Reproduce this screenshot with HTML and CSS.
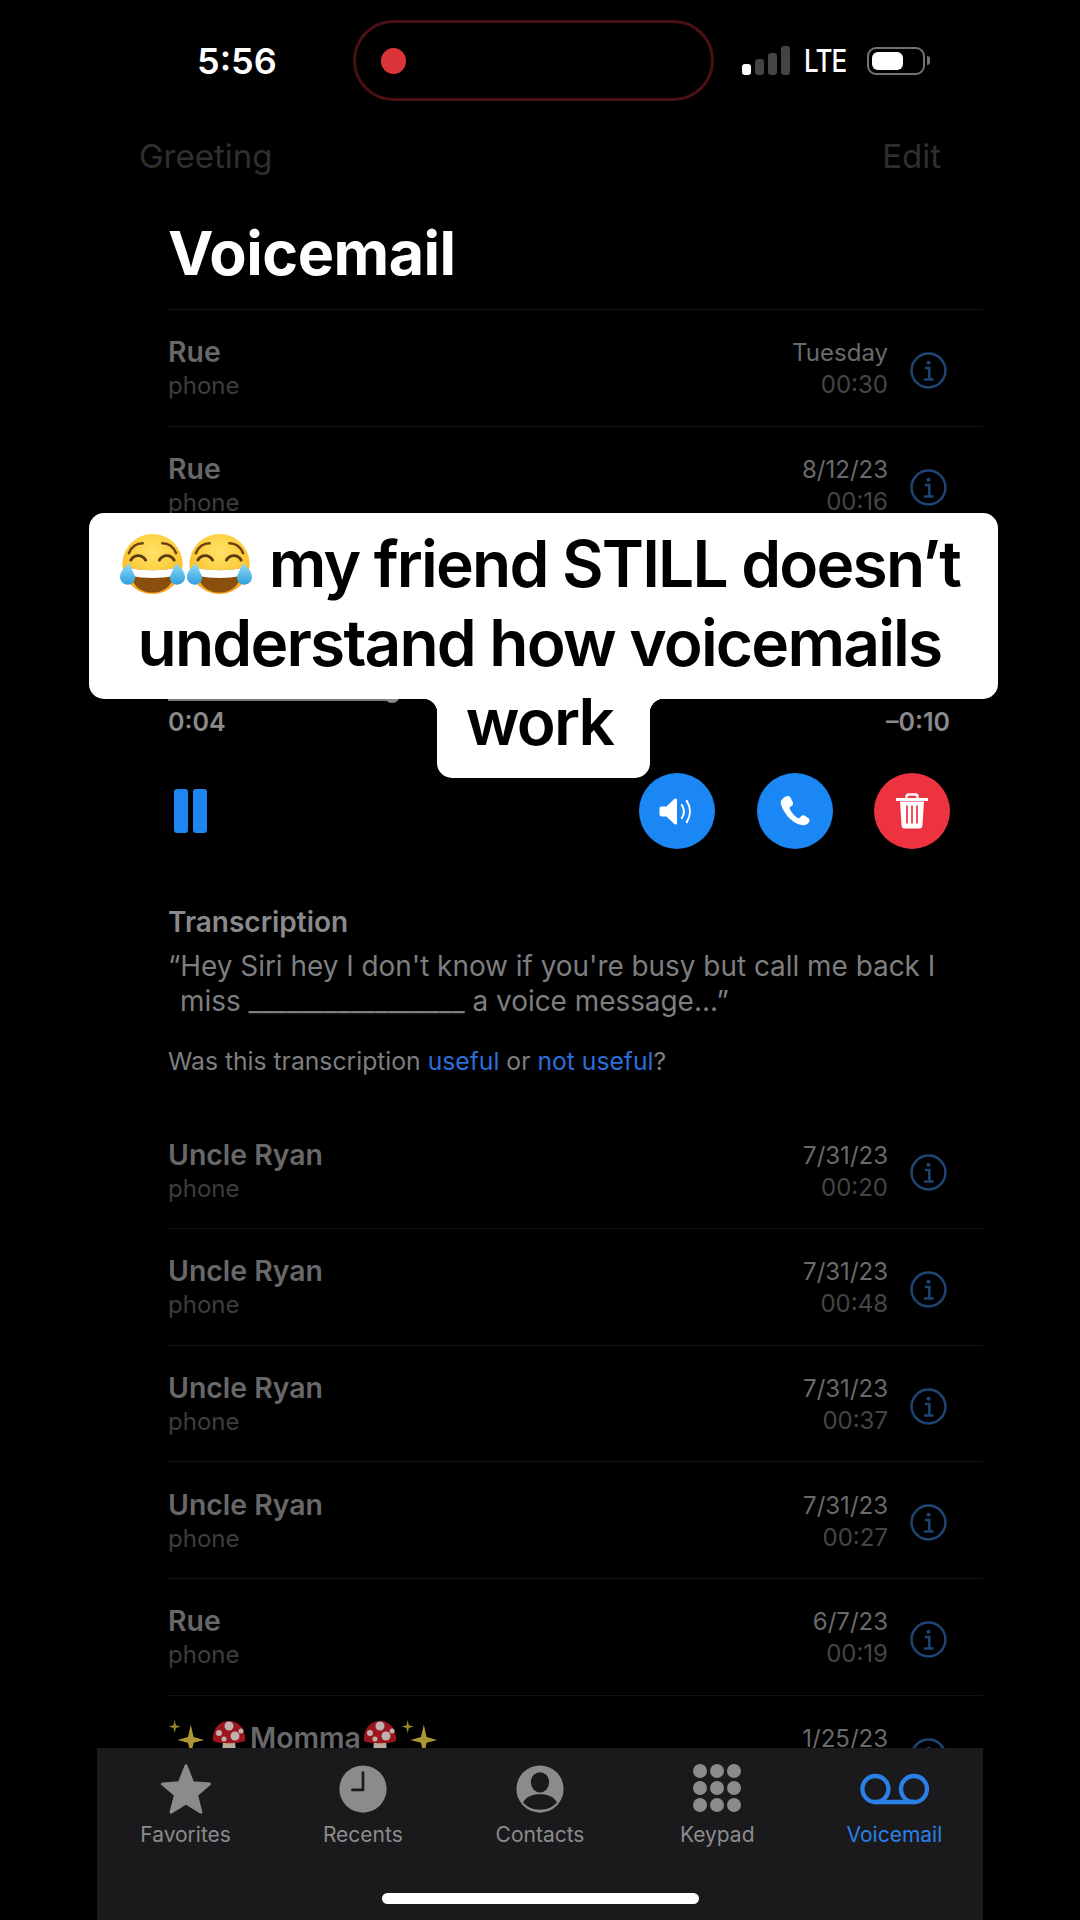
FILE: index.html
```html
<!DOCTYPE html>
<html lang="en">
<head>
    <meta charset="UTF-8">
    <meta name="viewport" content="width=device-width, initial-scale=1.0">
    <title>Voicemail</title>
    <link rel="stylesheet" href="styles.css">
</head>
<body>
    <!-- Shared icons -->
    <svg class="defs" width="0" height="0">
        <defs>
            <radialGradient id="faceFill" cx="50%" cy="30%" r="75%">
                <stop offset="0" stop-color="#ffe368"/>
                <stop offset="0.65" stop-color="#fdc531"/>
                <stop offset="1" stop-color="#f09a17"/>
            </radialGradient>
            <linearGradient id="tearFill" x1="0" y1="0" x2="0" y2="1">
                <stop offset="0" stop-color="#8fdcf8"/>
                <stop offset="1" stop-color="#2f9fe0"/>
            </linearGradient>
            <symbol id="i-info" viewBox="0 0 36 36">
                <circle cx="18" cy="18" r="16.5" fill="none" stroke="currentColor" stroke-width="2.4"/>
                <circle cx="18" cy="10.5" r="2" fill="currentColor"/>
                <path d="M14.5 15.5h4.3v11M13.5 26.8h9.5" fill="none" stroke="currentColor" stroke-width="2.4"/>
            </symbol>
            <symbol id="i-joy" viewBox="0 0 68 66">
                <circle cx="34" cy="33" r="30.5" fill="url(#faceFill)"/>
                <path d="M10 22c3-7 8-10 14-10" fill="none" stroke="#6b4210" stroke-width="2.6" stroke-linecap="round"/>
                <path d="M58 22c-3-7-8-10-14-10" fill="none" stroke="#6b4210" stroke-width="2.6" stroke-linecap="round"/>
                <path d="M12 29c4-6 11-6 15 0" fill="none" stroke="#5a3a10" stroke-width="3" stroke-linecap="round"/>
                <path d="M41 29c4-6 11-6 15 0" fill="none" stroke="#5a3a10" stroke-width="3" stroke-linecap="round"/>
                <path d="M11 37c15 3 31 3 46 0c0 16-10 25-23 25s-23-9-23-25z" fill="#8a4f0c"/>
                <path d="M11 37c15 3 31 3 46 0c0 3-.4 5-1 8c-14 3-30 3-44 0c-.6-3-1-5-1-8z" fill="#fff"/>
                <path d="M10 32c-3 4-9 8-9 14c0 5 4 8 8 8c5 0 8-4 7-9z" fill="url(#tearFill)"/>
                <path d="M58 32c3 4 9 8 9 14c0 5-4 8-8 8c-5 0-8-4-7-9z" fill="url(#tearFill)"/>
            </symbol>
            <symbol id="i-sparkle" viewBox="0 0 40 44">
                <path d="M24 8l3 13l11 3l-11 3l-3 13l-3-13l-11-3l11-3z" fill="#ad9735"/>
                <path d="M7 3l1.300 5.500l5 1.500l-5 1.500l-1.300 5.500l-1.300-5.500l-5-1.500l5-1.500z" fill="#96822e"/>
                <path d="M9 32l1 4l4 1l-4 1l-1 4l-1-4l-4-1l4-1z" fill="#96822e"/>
            </symbol>
            <symbol id="i-shroom" viewBox="0 0 36 38">
                <path d="M12 22h12l1 12c0 3-14 3-14 0z" fill="#b9aa9a"/>
                <path d="M2 22C1 9 9 2 18 2s17 7 16 20c-6 3-26 3-32 0z" fill="#9c161d"/>
                <circle cx="18" cy="7" r="4.500" fill="#bfb2ae"/>
                <circle cx="8" cy="14" r="3" fill="#bfb2ae"/>
                <circle cx="24" cy="17" r="4.500" fill="#bfb2ae"/>
                <circle cx="13" cy="20" r="2.500" fill="#bfb2ae"/>
                <circle cx="30" cy="12" r="2.500" fill="#bfb2ae"/>
            </symbol>
        </defs>
    </svg>

    <div class="app">
        <!-- Status bar -->
        <div class="status">
            <span class="clock">5:56</span>
            <div class="island"><span class="rec-dot"></span></div>
            <div class="signal">
                <span class="bar bar-1"></span>
                <span class="bar bar-2"></span>
                <span class="bar bar-3"></span>
                <span class="bar bar-4"></span>
            </div>
            <span class="lte">LTE</span>
            <div class="battery"><span class="battery-level"></span></div>
            <span class="battery-tip"></span>
        </div>

        <div class="nav">
            <span>Greeting</span>
            <span>Edit</span>
        </div>

        <h1 class="title">Voicemail</h1>

        <div class="list">
            <div class="row">
                <div class="who"><div class="name">Rue</div><div class="kind">phone</div></div>
                <div class="when"><div class="date">Tuesday</div><div class="length">00:30</div></div>
                <svg class="info"><use href="#i-info"/></svg>
            </div>
            <div class="row">
                <div class="who"><div class="name">Rue</div><div class="kind">phone</div></div>
                <div class="when"><div class="date">8/12/23</div><div class="length">00:16</div></div>
                <svg class="info"><use href="#i-info"/></svg>
            </div>

            <!-- Open message -->
            <div class="detail">
                <div class="slider"><span class="slider-knob"></span></div>
                <div class="times">
                    <span>0:04</span>
                    <span>–0:10</span>
                </div>
                <div class="controls">
                    <div class="pause"><span></span><span></span></div>
                    <div class="round blue">
                        <svg width="36" height="31" viewBox="0 0 44 38">
                            <path d="M3 13h6L19 3.500c1-1 3-.5 3 1.500v28c0 2-2 2.500-3 1.500L9 25H3c-1.500 0-2.500-1-2.500-2.500v-7C.5 14 1.500 13 3 13z" fill="#fff"/>
                            <path d="M28 11c3 5 3 11 0 16" fill="none" stroke="#fff" stroke-width="2.500" stroke-linecap="round"/>
                            <path d="M34 6c5 8 5 18 0 26" fill="none" stroke="#fff" stroke-width="2.500" stroke-linecap="round"/>
                        </svg>
                    </div>
                    <div class="round blue">
                        <svg width="30" height="32" viewBox="0 0 34 36">
                            <path d="M7 1.500c2-1 4-.5 5 1.500l2.500 5c.7 1.500.3 3-1 4l-2 1.500c-.7.500-.8 1.200-.5 2c2 4.500 5 8 9 10.500c.8.500 1.500.4 2.100-.2l1.800-1.800c1.200-1.200 2.700-1.400 4.100-.5l4 2.500c1.800 1.200 2 3.200.8 4.800c-2 2.800-5 4-8.300 3C15 33 4 21 1 10c-.8-3.500 2-7 6-8.500z" fill="#fff"/>
                        </svg>
                    </div>
                    <div class="round red">
                        <svg width="32" height="36" viewBox="0 0 32 36">
                            <path d="M1 6.500h30" stroke="#fff" stroke-width="3" stroke-linecap="round"/>
                            <path d="M10.500 6V3.500c0-1 .8-2 2-2h7c1.200 0 2 1 2 2V6" fill="none" stroke="#fff" stroke-width="2.400"/>
                            <path d="M4 8.500h24l-1.600 24.500c-.1 1.500-1.200 2.500-2.700 2.500H8.300c-1.500 0-2.600-1-2.700-2.500z" fill="#fff"/>
                            <path d="M11 12.500v18M16 12.500v18M21 12.500v18" stroke="#ee3340" stroke-width="1.700"/>
                        </svg>
                    </div>
                </div>
                <div class="transcript-title">Transcription</div>
                <p class="transcript">“Hey Siri hey I don't know if you're busy but call me back I<br><span class="indent">miss <span class="gap">_________________</span> a voice message...”</span></p>
                <p class="feedback">Was this transcription <span class="link">useful</span> or <span class="link">not useful</span>?</p>
            </div>

            <div class="row">
                <div class="who"><div class="name">Uncle Ryan</div><div class="kind">phone</div></div>
                <div class="when"><div class="date">7/31/23</div><div class="length">00:20</div></div>
                <svg class="info"><use href="#i-info"/></svg>
            </div>
            <div class="row">
                <div class="who"><div class="name">Uncle Ryan</div><div class="kind">phone</div></div>
                <div class="when"><div class="date">7/31/23</div><div class="length">00:48</div></div>
                <svg class="info"><use href="#i-info"/></svg>
            </div>
            <div class="row">
                <div class="who"><div class="name">Uncle Ryan</div><div class="kind">phone</div></div>
                <div class="when"><div class="date">7/31/23</div><div class="length">00:37</div></div>
                <svg class="info"><use href="#i-info"/></svg>
            </div>
            <div class="row">
                <div class="who"><div class="name">Uncle Ryan</div><div class="kind">phone</div></div>
                <div class="when"><div class="date">7/31/23</div><div class="length">00:27</div></div>
                <svg class="info"><use href="#i-info"/></svg>
            </div>
            <div class="row">
                <div class="who"><div class="name">Rue</div><div class="kind">phone</div></div>
                <div class="when"><div class="date">6/7/23</div><div class="length">00:19</div></div>
                <svg class="info"><use href="#i-info"/></svg>
            </div>
            <div class="row">
                <div class="who">
                    <div class="name name-emoji">
                        <svg class="sparkle"><use href="#i-sparkle"/></svg>
                        <svg class="shroom"><use href="#i-shroom"/></svg>
                        <span>Momma</span>
                        <svg class="shroom"><use href="#i-shroom"/></svg>
                        <svg class="sparkle"><use href="#i-sparkle"/></svg>
                    </div>
                    <div class="kind">phone</div>
                </div>
                <div class="when"><div class="date">1/25/23</div><div class="length">00:12</div></div>
                <svg class="info"><use href="#i-info"/></svg>
            </div>
        </div>

        <!-- Tab bar over the list -->
        <div class="tabbar">
            <div class="tab">
                <svg class="tab-icon" viewBox="0 0 56 56">
                    <path d="M28 4l7 17.500 17.500 1.200-13.500 11.500 4.500 18L28 42.500 12.500 52l4.500-18L3.500 22.700 21 21.500z" fill="currentColor" stroke="currentColor" stroke-width="3" stroke-linejoin="round"/>
                </svg>
                <span>Favorites</span>
            </div>
            <div class="tab">
                <svg class="tab-icon" viewBox="0 0 56 56">
                    <circle cx="28" cy="28" r="24.500" fill="currentColor"/>
                    <path d="M28 11v18H17" fill="none" stroke="#1a1a1c" stroke-width="2.800" stroke-linecap="round" stroke-linejoin="round"/>
                </svg>
                <span>Recents</span>
            </div>
            <div class="tab">
                <svg class="tab-icon" viewBox="0 0 56 56">
                    <circle cx="28" cy="28" r="24.500" fill="currentColor"/>
                    <ellipse cx="28" cy="21" rx="9.500" ry="10.500" fill="#1a1a1c"/>
                    <path d="M10.500 42c3-6 10-8.500 17.500-8.500S42.500 36 45.500 42C41 47 35 49.500 28 49.500S15 47 10.500 42z" fill="#1a1a1c"/>
                </svg>
                <span>Contacts</span>
            </div>
            <div class="tab">
                <div class="keypad">
                    <span></span><span></span><span></span>
                    <span></span><span></span><span></span>
                    <span></span><span></span><span></span>
                </div>
                <span>Keypad</span>
            </div>
            <div class="tab tab-active">
                <svg class="tab-icon" viewBox="0 0 72 56">
                    <circle cx="16" cy="28" r="13.500" fill="none" stroke="currentColor" stroke-width="4.500"/>
                    <circle cx="56" cy="28" r="13.500" fill="none" stroke="currentColor" stroke-width="4.500"/>
                    <path d="M16 41.500h40" stroke="currentColor" stroke-width="4.500"/>
                </svg>
                <span>Voicemail</span>
            </div>
            <div class="home-bar"></div>
        </div>

        <!-- Video caption -->
        <div class="caption">
            <div class="caption-main">
                <div class="caption-line">
                    <svg class="joy"><use href="#i-joy"/></svg><svg class="joy"><use href="#i-joy"/></svg>
                    <span>my friend STILL doesn’t</span>
                </div>
                <div class="caption-line">understand how voicemails</div>
            </div>
            <div class="caption-tail">work</div>
        </div>
    </div>
</body>
</html>
```

FILE: styles.css
```css
body, html {
    margin: 0;
    padding: 0;
    background-color: #000;
    font-family: Inter, "Liberation Sans", sans-serif;
}

.defs {
    display: block;
    position: absolute;
}

.app {
    position: relative;
    width: 1080px;
    height: 1920px;
    overflow: hidden;
    background-color: #000;
}

/* Status bar */
.status {
    display: flex;
    align-items: center;
    height: 81px;
    padding: 20px 0 0 197px;
    color: #fff;
}

.clock {
    width: 80px;
    font-size: 36px;
    font-weight: 600;
}

.island {
    display: flex;
    align-items: center;
    box-sizing: border-box;
    width: 361px;
    height: 81px;
    margin-left: 76px;
    padding-left: 25px;
    border: 3px solid #4a1012;
    border-radius: 41px;
}

.rec-dot {
    width: 25px;
    height: 26px;
    border-radius: 50%;
    background-color: #dc3539;
}

.signal {
    display: flex;
    align-items: flex-end;
    gap: 4px;
    height: 29px;
    margin-left: 28px;
}

.bar {
    width: 9px;
    border-radius: 3px;
    background-color: #444446;
}

.bar-1 { height: 11px; background-color: #fff; }
.bar-2 { height: 16px; }
.bar-3 { height: 22px; }
.bar-4 { height: 29px; }

.lte {
    width: 44px;
    margin-left: 14px;
    font-size: 31px;
    font-weight: 500;
    letter-spacing: -1px;
    transform: scaleX(0.84);
    transform-origin: left center;
}

.battery {
    box-sizing: border-box;
    width: 58px;
    height: 28px;
    margin-left: 19px;
    padding: 3px;
    border: 2px solid #737375;
    border-radius: 9px;
}

.battery-level {
    display: block;
    width: 31px;
    height: 18px;
    border-radius: 6px;
    background-color: #fff;
}

.battery-tip {
    width: 3px;
    height: 9px;
    margin-left: 2px;
    border-radius: 0 3px 3px 0;
    background-color: #737375;
}

/* Nav and title */
.nav {
    display: flex;
    justify-content: space-between;
    margin: 35px 139px 0;
    font-size: 33px;
    line-height: 40px;
    color: #2f2f31;
}

.title {
    margin: 42px 0 21px 168px;
    font-size: 61px;
    font-weight: 700;
    line-height: 70px;
    letter-spacing: -0.5px;
    color: #fff;
}

/* Voicemail rows */
.list {
    margin: 0 97px 0 168px;
    border-top: 1px solid #121212;
}

.row {
    display: flex;
    align-items: center;
    box-sizing: border-box;
    height: 116.7px;
    padding: 3px 36px 0 0;
    border-bottom: 1px solid #121212;
}

.who {
    flex: 1;
}

.name {
    font-size: 28.4px;
    font-weight: 600;
    line-height: 34px;
    color: #68686a;
}

.name-emoji {
    display: flex;
    align-items: center;
    height: 34px;
}

.sparkle {
    flex: none;
    width: 38px;
    height: 42px;
    margin-right: 5px;
}

.shroom {
    flex: none;
    width: 36px;
    height: 38px;
    margin-right: 3px;
}

.name-emoji span {
    margin-right: 1px;
}

.kind {
    font-size: 24px;
    line-height: 34px;
    color: #3d3d3f;
}

.when {
    text-align: right;
    font-size: 24px;
    line-height: 32px;
}

.date {
    color: #6a6a6c;
}

.length {
    color: #454547;
}

.info {
    width: 37px;
    height: 37px;
    margin: 2px 0 0 22px;
    color: #1d4674;
}

/* Open message */
.detail {
    padding: 155px 33px 0 0;
}

.slider {
    position: relative;
    width: 224px;
    height: 3px;
    background-color: #7c7c7e;
}

.slider-knob {
    position: absolute;
    top: -11px;
    right: -8px;
    width: 16px;
    height: 16px;
    border-radius: 50%;
    background-color: #8a8a8c;
}

.times {
    display: flex;
    justify-content: space-between;
    margin-top: 7px;
    font-size: 25px;
    font-weight: 600;
    line-height: 28px;
    color: #8a8a8c;
}

.controls {
    display: flex;
    align-items: center;
    gap: 41.5px;
    margin-top: 37px;
}

.pause {
    display: flex;
    gap: 5px;
    margin: 0 auto 0 6px;
}

.pause span {
    width: 14px;
    height: 44px;
    border-radius: 3px;
    background-color: #1d86f0;
}

.round {
    display: flex;
    align-items: center;
    justify-content: center;
    width: 76px;
    height: 76px;
    border-radius: 50%;
}

.blue {
    background-color: #1a87f5;
}

.red {
    background-color: #ee3340;
}

.transcript-title {
    margin-top: 56px;
    font-size: 28px;
    font-weight: 600;
    line-height: 34px;
    color: #8a8a8c;
}

.transcript {
    margin: 10px 0 0 0;
    font-size: 27.9px;
    line-height: 35px;
    color: #7e7e80;
}

.indent {
    padding-left: 12px;
}

.feedback {
    margin: 25px 0 0 0;
    padding-bottom: 34px;
    font-size: 24.7px;
    line-height: 34px;
    color: #7e7e80;
}

.link {
    color: #2a6fdc;
}

/* Tab bar */
.tabbar {
    position: absolute;
    left: 97px;
    bottom: 0;
    display: flex;
    box-sizing: border-box;
    width: 886px;
    height: 172px;
    padding-top: 14px;
    background-color: #1a1a1c;
}

.tab {
    display: flex;
    flex: 1;
    flex-direction: column;
    align-items: center;
    font-size: 21px;
    line-height: 26px;
    color: #8b8b8e;
}

.tab-icon {
    height: 54px;
    margin-bottom: 6px;
}

.tab-active {
    color: #2a80e6;
}

.keypad {
    display: grid;
    grid-template-columns: repeat(3, 14px);
    gap: 3px;
    height: 48px;
    margin: 2px 0 10px;
}

.keypad span {
    width: 14px;
    height: 14px;
    border-radius: 50%;
    background-color: #8b8b8e;
}

.home-bar {
    position: absolute;
    left: 285px;
    bottom: 16px;
    width: 317px;
    height: 11px;
    border-radius: 6px;
    background-color: #fff;
}

/* Caption */
.caption {
    position: absolute;
    top: 513px;
    left: 89px;
    display: flex;
    flex-direction: column;
    align-items: center;
    width: 909px;
    font-size: 64px;
    font-weight: 600;
    line-height: 79px;
    letter-spacing: -1.8px;
    color: #000;
}

.caption-main {
    box-sizing: border-box;
    width: 100%;
    height: 186px;
    padding: 11px 8px 0 0;
    border-radius: 15px;
    background-color: #fff;
}

.caption-line {
    display: flex;
    justify-content: center;
    align-items: center;
    white-space: nowrap;
}

.joy {
    flex: none;
    width: 67px;
    height: 66px;
}

.joy + span {
    margin-left: 16px;
}

.caption-tail {
    position: relative;
    box-sizing: border-box;
    width: 213px;
    height: 79px;
    padding-right: 8px;
    text-align: center;
    line-height: 46px;
    border-radius: 0 0 15px 15px;
    background-color: #fff;
}

.caption-tail::before,
.caption-tail::after {
    content: "";
    position: absolute;
    top: 0;
    width: 14px;
    height: 14px;
}

.caption-tail::before {
    left: -14px;
    background: radial-gradient(circle at 0 100%, transparent 14px, #fff 14.5px);
}

.caption-tail::after {
    right: -14px;
    background: radial-gradient(circle at 100% 100%, transparent 14px, #fff 14.5px);
}
```
